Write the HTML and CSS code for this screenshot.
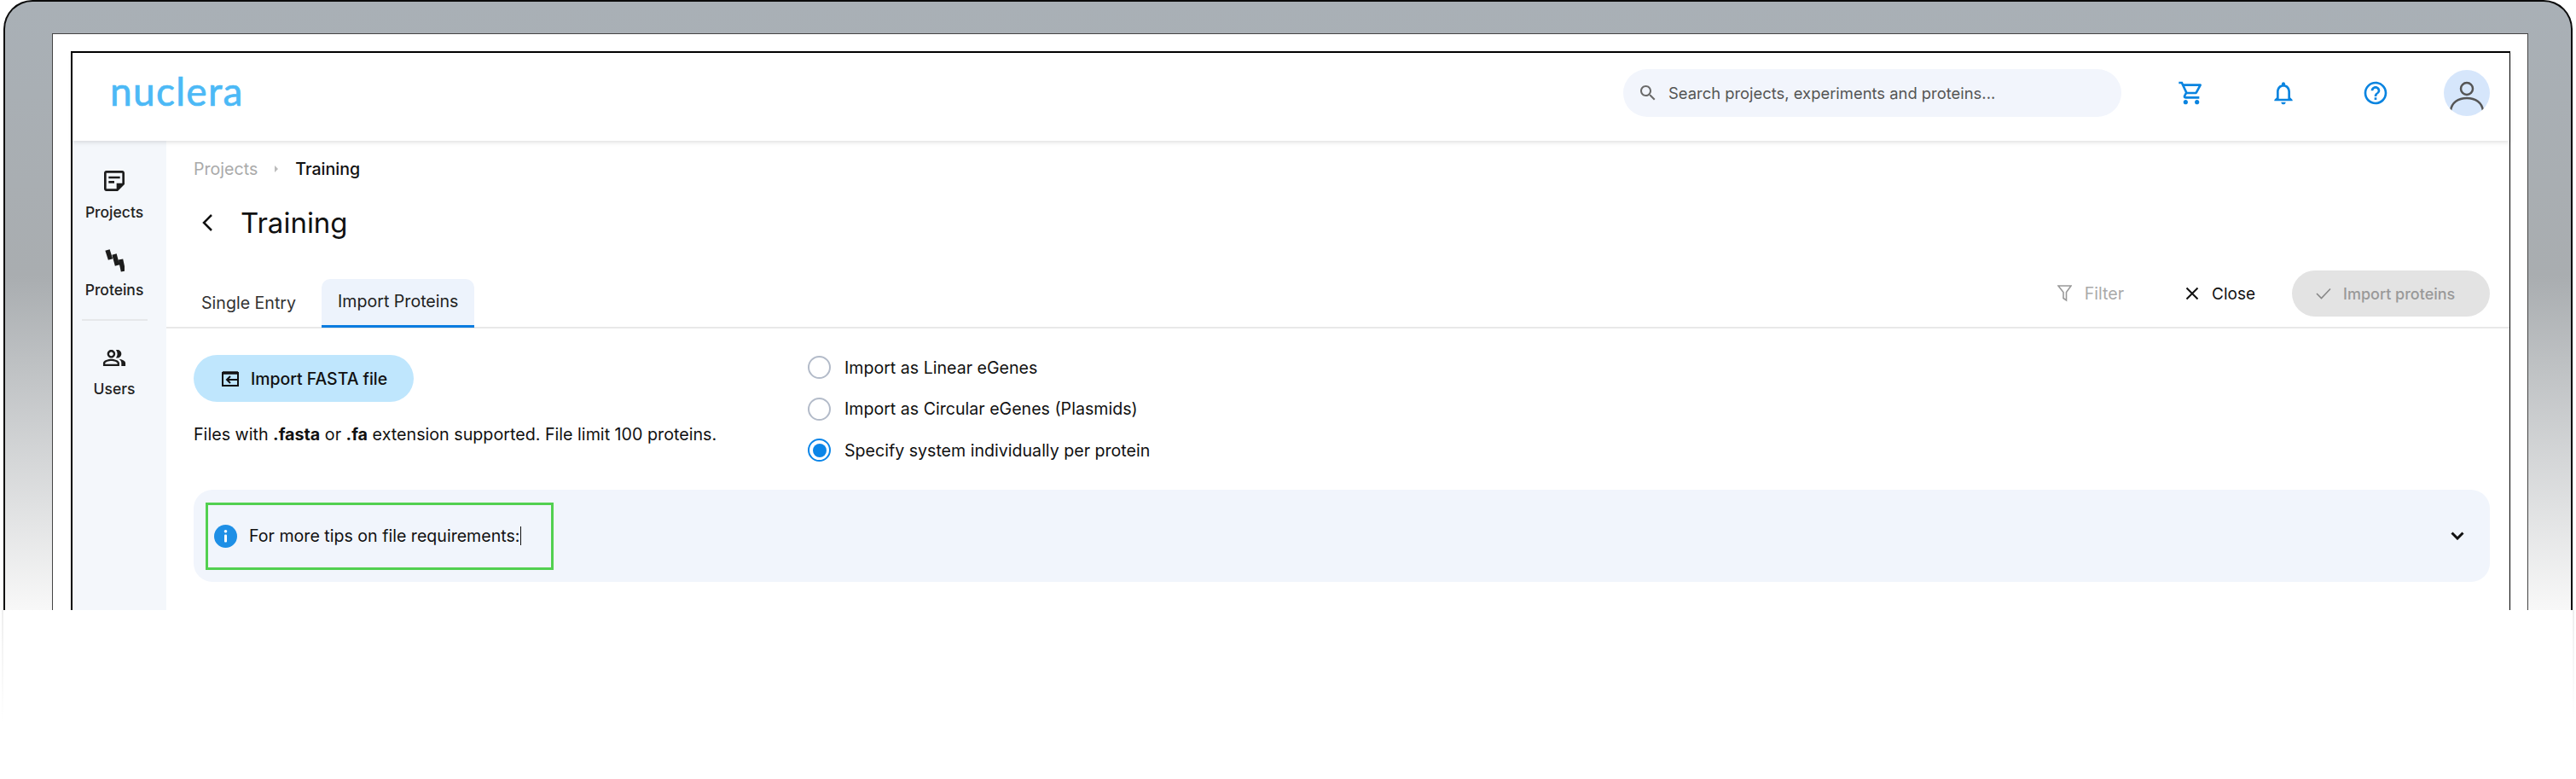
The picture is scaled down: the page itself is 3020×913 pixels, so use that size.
FILE: index.html
```html
<!DOCTYPE html>
<html lang="en">
<head>
<meta charset="utf-8">
<title>Nuclera - Import Proteins</title>
<link rel="stylesheet" href="styles.css">
</head>
<body>
<div class="laptop">
  <div class="screen">
    <div class="frame">
      <header class="topbar">
        <div class="logo">nuclera</div>
        <div class="search">
          <svg class="search-icon" viewBox="0 0 24 24"><path d="M15.5 14h-.79l-.28-.27C15.41 12.59 16 11.11 16 9.5 16 5.91 13.09 3 9.5 3S3 5.91 3 9.5 5.91 16 9.5 16c1.61 0 3.09-.59 4.23-1.57l.27.28v.79l5 4.99L20.49 19l-4.99-5zm-6 0C7.01 14 5 11.99 5 9.5S7.01 5 9.5 5 14 7.01 14 9.5 11.99 14 9.5 14z"/></svg>
          <span>Search projects, experiments and proteins...</span>
        </div>
        <div class="top-actions">
          <span class="top-icon"><svg viewBox="0 0 24 24"><path d="M15.55 13c.75 0 1.41-.41 1.75-1.03l3.58-6.49c.37-.66-.11-1.48-.87-1.48H5.21l-.94-2H1v2h2l3.6 7.59-1.35 2.44C4.52 15.37 5.48 17 7 17h12v-2H7l1.1-2h7.45zM6.16 6h12.15l-2.76 5H8.53L6.16 6zM7 18c-1.1 0-1.99.9-1.99 2S5.9 22 7 22s2-.9 2-2-.9-2-2-2zm10 0c-1.1 0-1.99.9-1.99 2s.89 2 1.99 2 2-.9 2-2-.9-2-2-2z"/></svg></span>
          <span class="top-icon"><svg viewBox="0 0 24 24"><path d="M12 22c1.1 0 2-.9 2-2h-4c0 1.1.9 2 2 2zm6-6v-5c0-3.07-1.63-5.64-4.5-6.32V4c0-.83-.67-1.5-1.5-1.5s-1.5.67-1.5 1.5v.68C7.64 5.36 6 7.92 6 11v5l-2 2v1h16v-1l-2-2zm-2 1H8v-6c0-2.48 1.51-4.5 4-4.5s4 2.02 4 4.5v6z"/></svg></span>
          <span class="top-icon"><svg viewBox="0 0 24 24"><path d="M11 18h2v-2h-2v2zm1-16C6.48 2 2 6.48 2 12s4.48 10 10 10 10-4.48 10-10S17.52 2 12 2zm0 18c-4.41 0-8-3.59-8-8s3.59-8 8-8 8 3.59 8 8-3.59 8-8 8zm0-14c-2.21 0-4 1.79-4 4h2c0-1.1.9-2 2-2s2 .9 2 2c0 2-3 1.75-3 5h2c0-2.25 3-2.5 3-5 0-2.21-1.79-4-4-4z"/></svg></span>
          <span class="avatar"><svg viewBox="0 0 54 54"><circle cx="27" cy="22" r="7"/><path d="M8 48c1-10 9-15 19-15s18 5 19 15"/></svg></span>
        </div>
      </header>
      <div class="workspace">
        <nav class="sidebar">
          <svg class="nav-icon projects-icon" viewBox="3 3 18 18"><path d="M19 5v9h-5v5H5V5h14m0-2H5c-1.1 0-2 .9-2 2v14c0 1.1.9 2 2 2h10l6-6V5c0-1.1-.9-2-2-2zm-7 11H7v-2h5v2zm5-4H7V8h10v2z"/></svg>
          <span class="nav-label projects-label">Projects</span>
          <svg class="proteins-icon" viewBox="0 0 24 29"><path d="M4 2l3.500 11M12 7l3.500 13M19.500 13l3 14"/></svg>
          <span class="nav-label proteins-label">Proteins</span>
          <span class="nav-divider"></span>
          <svg class="nav-icon users-icon" viewBox="1 4 22 16"><path d="M16.67 13.13C18.04 14.06 19 15.32 19 17v3h4v-3c0-2.18-3.57-3.47-6.33-3.87z"/><path d="M15 12c2.21 0 4-1.79 4-4s-1.790-4-4-4c-.47 0-.91.1-1.33.24C14.5 5.27 15 6.58 15 8s-.5 2.73-1.33 3.76c.42.14.86.24 1.33.24z"/><path d="M9 12c2.21 0 4-1.79 4-4s-1.79-4-4-4-4 1.79-4 4 1.79 4 4 4zm0-6c1.1 0 2 .9 2 2s-.9 2-2 2-2-.9-2-2 .9-2 2-2z"/><path d="M9 13c-2.67 0-8 1.34-8 4v3h16v-3c0-2.66-5.33-4-8-4zm6 5H3v-.99C3.2 16.29 6.3 15 9 15s5.8 1.29 6 2z"/></svg>
          <span class="nav-label users-label">Users</span>
        </nav>
        <main class="main">
          <div class="crumbs">
            <span class="crumb-muted">Projects</span>
            <svg class="crumb-sep" viewBox="0 0 6 10"><path d="M1 1l4 4-4 4z"/></svg>
            <span>Training</span>
          </div>
          <div class="title-row">
            <svg class="back" viewBox="0 0 14 22"><path d="M12 2L3 11l9 9"/></svg>
            <h1>Training</h1>
          </div>
          <div class="tabbar">
            <div class="tabs">
              <span class="tab">Single Entry</span>
              <span class="tab tab-active">Import Proteins</span>
            </div>
            <div class="bar-actions">
              <span class="ghost muted">
                <svg class="filter-icon" viewBox="0 0 17 20"><path d="M1 1h15l-5.500 7.500V18L7 15.500V8.500z"/></svg>
                Filter
              </span>
              <span class="ghost close-btn">
                <svg class="close-icon" viewBox="0 0 16 16"><path d="M1.500 1.500l13 13M14.500 1.500l-13 13"/></svg>
                Close
              </span>
              <span class="primary-disabled">
                <svg class="check-icon" viewBox="0 0 18 14"><path d="M1 7l5.500 5.500L17 1.500"/></svg>
                Import proteins
              </span>
            </div>
          </div>
          <section class="import-row">
            <div class="import-left">
              <span class="fasta-btn">
                <svg class="fasta-icon" viewBox="0 0 20 18"><path d="M1 2h18v15H1z"/><path class="fasta-top" d="M1 2h18"/><path d="M19 10H6M10 6l-4 4 4 4"/></svg>
                Import FASTA file
              </span>
              <p class="hint">Files with <b>.fasta</b> or <b>.fa</b> extension supported. File limit 100 proteins.</p>
            </div>
            <div class="radios">
              <div class="radio-row"><span class="radio"></span>Import as Linear eGenes</div>
              <div class="radio-row"><span class="radio"></span>Import as Circular eGenes (Plasmids)</div>
              <div class="radio-row"><span class="radio radio-on"></span>Specify system individually per protein</div>
            </div>
          </section>
          <div class="tips">
            <div class="highlight">
              <svg class="info-icon" viewBox="0 0 27 27"><circle cx="13.500" cy="13.500" r="13.500"/><rect class="info-mark" x="12" y="11.500" width="3" height="9" rx="1"/><circle class="info-mark" cx="13.500" cy="7.800" r="1.800"/></svg>
              <span class="tips-text">For more tips on file requirements:</span><span class="caret"></span>
            </div>
            <svg class="tips-chevron" viewBox="0 0 16 10"><path d="M1.500 1.500L8 8l6.500-6.500"/></svg>
          </div>
        </main>
      </div>
    </div>
  </div>
</div>
<div class="base"></div>
</body>
</html>
```
FILE: styles.css
```css
* { box-sizing: border-box; }
html, body { margin: 0; padding: 0; height: 913px; overflow: hidden; background: #fff; }
body { font-family: Inter, "Liberation Sans", sans-serif; color: #111; font-size: 19.600px; }

.laptop {
  margin: 0 4px;
  height: 715px;
  padding: 37px 50px 0 55px;
  overflow: hidden;
  border: 2px solid #0b0b0b;
  border-bottom: 0;
  border-radius: 34px 34px 0 0;
  background: linear-gradient(#a9b0b6 0, #a9adb0 45%, #f8f8f8 100%);
}
.base {
  height: 130px;
  margin: 0 2px;
  border-left: 2px solid;
  border-right: 2px solid;
  border-image: linear-gradient(#eee, #fff) 1;
}
.screen {
  height: 100%;
  padding: 20px 20px 0 21px;
  background: #fff;
  border: solid #444;
  border-width: 1px 1px 0 1px;
}
.frame {
  display: flex;
  flex-direction: column;
  height: 100%;
  border: solid #000;
  border-width: 2px 1px 0 2px;
}

.topbar {
  position: relative;
  z-index: 1;
  display: flex;
  align-items: center;
  flex: none;
  height: 103px;
  padding: 0 23px 9px 44px;
  background: #fff;
  box-shadow: 0 2px 5px rgba(0, 0, 0, .12);
}
.logo {
  padding-bottom: 5px;
  font-family: Lato, sans-serif;
  font-size: 46px;
  line-height: 1;
  color: #4cb9f6;
  letter-spacing: 1.300px;
  -webkit-text-stroke: .7px #4cb9f6;
}
.search {
  display: flex;
  align-items: center;
  gap: 12px;
  width: 584px;
  height: 56px;
  margin-left: auto;
  padding-left: 17px;
  border-radius: 28px;
  background: #f2f5fc;
  color: #555;
  font-size: 18.400px;
}
.search-icon { width: 24px; height: 24px; fill: #6a6a6a; }
.top-actions { display: flex; align-items: center; gap: 68px; margin-left: 62px; }
.top-icon { display: flex; justify-content: center; width: 40px; }
.top-icon svg { width: 32px; height: 32px; fill: #0a84e0; }
.avatar {
  display: block;
  width: 54px;
  height: 54px;
  margin-left: -8px;
  overflow: hidden;
  border-radius: 50%;
  background: #d6e6fb;
}
.avatar svg { display: block; width: 54px; height: 54px; fill: none; stroke: #555; stroke-width: 2.500; }

.workspace { display: flex; flex: 1; min-height: 0; }
.sidebar {
  display: flex;
  flex-direction: column;
  align-items: center;
  flex: none;
  width: 110px;
  padding: 35px 12px 0 0;
  background: #f4f7fb;
}
.nav-icon { display: block; flex: none; fill: #1c1c1c; }
.nav-label { display: block; height: 20px; font-size: 17.500px; line-height: 20px; font-weight: 500; color: #222; }
.projects-icon { width: 24px; height: 24px; }
.projects-label { margin-top: 15px; }
.proteins-icon { display: block; flex: none; width: 24px; height: 29px; margin-top: 32px; fill: none; stroke: #1c1c1c; stroke-width: 5.500; }
.proteins-label { margin-top: 10px; }
.nav-divider { width: 77px; height: 2px; margin-top: 24px; background: #e6e8ea; }
.users-icon { width: 28px; height: 19px; margin-top: 34px; }
.users-label { margin-top: 17px; }

.main { flex: 1; min-width: 0; padding-top: 21px; background: #fff; }
.crumbs { display: flex; align-items: center; height: 24px; padding-left: 32px; font-weight: 500; }
.crumb-muted { color: #aaa; font-weight: 400; }
.crumb-sep { width: 6px; height: 10px; margin: 0 19px 0 19px; fill: #bbb; }
.title-row { display: flex; align-items: center; height: 44px; margin-top: 29px; padding-left: 41px; }
.back { width: 14px; height: 22px; fill: none; stroke: #111; stroke-width: 2.500; }
h1 { margin: 0 0 0 32px; font-size: 33px; font-weight: 400; line-height: 44px; }

.tabbar {
  display: flex;
  justify-content: space-between;
  height: 68px;
  margin-top: 34px;
  padding: 0 23px 0 21px;
  border-bottom: 2px solid #e8e8e8;
}
.tabs { display: flex; align-items: flex-end; gap: 10px; }
.tab {
  display: flex;
  align-items: center;
  height: 57px;
  padding: 0 20px 2px;
  margin-bottom: -1px;
  color: #333;
}
.tab-active {
  padding: 0 19px 2px;
  border-radius: 10px 10px 0 0;
  border-bottom: 3px solid #0a7ce0;
  background: #edf3fc;
  color: #222;
}
.bar-actions { display: flex; align-items: flex-start; }
.ghost { display: flex; align-items: center; gap: 15px; height: 54px; font-size: 19px; font-weight: 400; }
.muted { color: #aaa; font-size: 19.600px; }
.filter-icon { width: 17px; height: 20px; fill: none; stroke: #999; stroke-width: 1.600; }
.close-btn { margin-left: 72px; color: #111; }
.close-icon { width: 16px; height: 16px; fill: none; stroke: #111; stroke-width: 2; }
.primary-disabled {
  display: flex;
  align-items: center;
  gap: 14px;
  width: 232px;
  height: 54px;
  margin-left: 43px;
  padding-left: 28px;
  border-radius: 27px;
  background: #e3e3e3;
  color: #999;
  font-size: 18px;
  font-weight: 500;
}
.check-icon { width: 18px; height: 14px; fill: none; stroke: #888; stroke-width: 1.600; }

.import-row { display: flex; height: 189px; padding: 31px 0 0 32px; }
.import-left { width: 720px; flex: none; }
.fasta-btn {
  display: inline-flex;
  align-items: center;
  gap: 14px;
  width: 258px;
  height: 55px;
  padding-left: 33px;
  border-radius: 28px;
  background: #bfe6fd;
  font-size: 19.400px;
  font-weight: 500;
  color: #111;
}
.fasta-icon { width: 20px; height: 18px; fill: none; stroke: #111; stroke-width: 2; }
.fasta-top { stroke-width: 3.500; }
.hint { margin: 26px 0 0; font-size: 19.700px; line-height: 24px; color: #111; }
.hint b { font-weight: 700; }
.radios { display: flex; flex-direction: column; gap: 21.500px; padding-top: 1px; }
.radio-row { display: flex; align-items: center; gap: 16px; height: 27px; color: #111; }
.radio { display: block; width: 27px; height: 27px; border: 2px solid #b3bbc9; border-radius: 50%; background: #fff; }
.radio-on { border-color: #0a85e8; padding: 3.500px; background: #0a85e8 content-box; }

.tips {
  display: flex;
  align-items: center;
  justify-content: space-between;
  height: 108px;
  margin: 0 23px 0 32px;
  padding: 0 30px 0 14px;
  border-radius: 22px;
  background: #f1f5fc;
}
.highlight {
  display: flex;
  align-items: center;
  width: 408px;
  height: 79px;
  padding-left: 7px;
  border: 3px solid #52d050;
}
.info-icon { width: 27px; height: 27px; margin-right: 14px; fill: #1e8fe6; }
.info-mark { fill: #fff; }
.tips-text { color: #111; }
.caret { width: 1.500px; height: 22px; background: #111; }
.tips-chevron { width: 16px; height: 10px; fill: none; stroke: #111; stroke-width: 3; }
```
